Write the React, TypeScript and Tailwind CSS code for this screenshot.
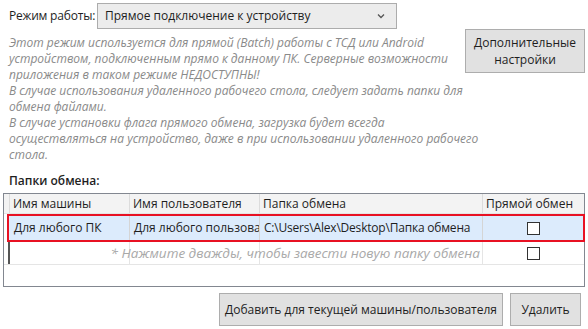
import React from "react";

const infoLines = [
  "Этот режим используется для прямой (Batch) работы с ТСД или Android",
  "устройством, подключенным прямо к данному ПК. Серверные возможности",
  "приложения в таком режиме НЕДОСТУПНЫ!",
  "В случае использования удаленного рабочего стола, следует задать папки для",
  "обмена файлами.",
  "В случае установки флага прямого обмена, загрузка будет всегда",
  "осуществляться на устройство, даже в при использовании удаленного рабочего",
  "стола.",
];

const Checkbox = () => (
  <div className="w-[13px] h-[13px] border border-[#333] bg-white" />
);

const App = () => {
  return (
    <div className="w-[588px] h-[329px] bg-white text-[12px] text-[#1e1e1e] font-['Open_Sans',sans-serif] overflow-hidden">
      <div className="flex">
        <div className="w-[456px] pl-[9px]">
          <div className="flex items-center h-[26px] mt-[3px]">
            <span className="w-[88px] whitespace-nowrap tracking-[-0.2px]">Режим работы:</span>
            <div className="flex items-center justify-between w-[300px] h-[26px] px-[7px] border border-[#acacac] bg-[#ececec]">
              <span className="whitespace-nowrap">Прямое подключение к устройству</span>
              <svg width="8" height="6" viewBox="0 0 8 6" className="mr-[4px]">
                <path d="M1 1.5 L4 4.5 L7 1.5" fill="none" stroke="#555" strokeWidth="1.3" />
              </svg>
            </div>
          </div>
          <div className="mt-[6px] italic text-[#8a8a8a] leading-[16px]">
            {infoLines.map((l) => (
              <div key={l} className="whitespace-nowrap">
                {l}
              </div>
            ))}
          </div>
        </div>
        <button className="mt-[29px] ml-[9px] w-[120px] h-[44px] border border-[#adadad] bg-[#e1e1e1] leading-[17px] text-[#1e1e1e]">
          Дополнительные
          <br />
          настройки
        </button>
      </div>

      <div className="pl-[9px] mt-[11px] font-semibold h-[14px] leading-[14px]">Папки обмена:</div>

      <div className="mx-[3px] mt-[5px] h-[94px] border border-[#828790]">
        <div className="flex h-[20px] bg-[#f3f3f3] border-b border-[#e5e5e5] leading-[19px]">
          <div className="w-[6px] border-r border-[#dcdcdc]" />
          <div className="w-[120px] pl-[3px] border-r border-[#dcdcdc]">Имя машины</div>
          <div className="w-[130px] pl-[3px] border-r border-[#dcdcdc]">Имя пользователя</div>
          <div className="w-[223px] pl-[3px] border-r border-[#dcdcdc]">Папка обмена</div>
          <div className="flex-1 pl-[3px]">Прямой обмен</div>
        </div>
        <div className="flex h-[28px] bg-[#dcebfc] border-2 border-[#e81123] ml-[3px] -mr-[1px] items-center">
          <div className="w-[121px] h-full pl-[5px] border-r border-[#d5d5d5] flex items-center">Для любого ПК</div>
          <div className="w-[130px] h-full pl-[4px] border-r border-[#d5d5d5] flex items-center overflow-hidden whitespace-nowrap">
            Для любого пользова
          </div>
          <div className="w-[223px] h-full pl-[4px] border-r border-[#d5d5d5] flex items-center whitespace-nowrap overflow-hidden tracking-[-0.2px]">
            C:\Users\Alex\Desktop\Папка обмена
          </div>
          <div className="flex-1 flex justify-center">
            <Checkbox />
          </div>
        </div>
        <div className="flex h-[23px] border-b border-[#e5e5e5] relative">
          <div className="w-[6px] border-r-2 border-[#555]" />
          <div className="w-[120px] border-r border-[#e5e5e5]" />
          <div className="w-[130px] border-r border-[#e5e5e5]" />
          <div className="w-[223px] border-r border-[#e5e5e5]" />
          <div className="flex-1 flex justify-center items-center">
            <Checkbox />
          </div>
          <div className="absolute left-0 top-0 w-[476px] h-full flex items-center justify-end italic text-[#a9a9a9] whitespace-nowrap text-[13.5px]">
            * Нажмите дважды, чтобы завести новую папку обмена
          </div>
        </div>
      </div>

      <div className="flex justify-end gap-[7px] mt-[6px] pr-[7px]">
        <button className="w-[284px] h-[33px] border border-[#adadad] bg-[#e1e1e1] text-[#1e1e1e]">
          Добавить для текущей машины/пользователя
        </button>
        <button className="w-[71px] h-[33px] border border-[#adadad] bg-[#e1e1e1] text-[#1e1e1e]">
          Удалить
        </button>
      </div>
    </div>
  );
};

export default App;
